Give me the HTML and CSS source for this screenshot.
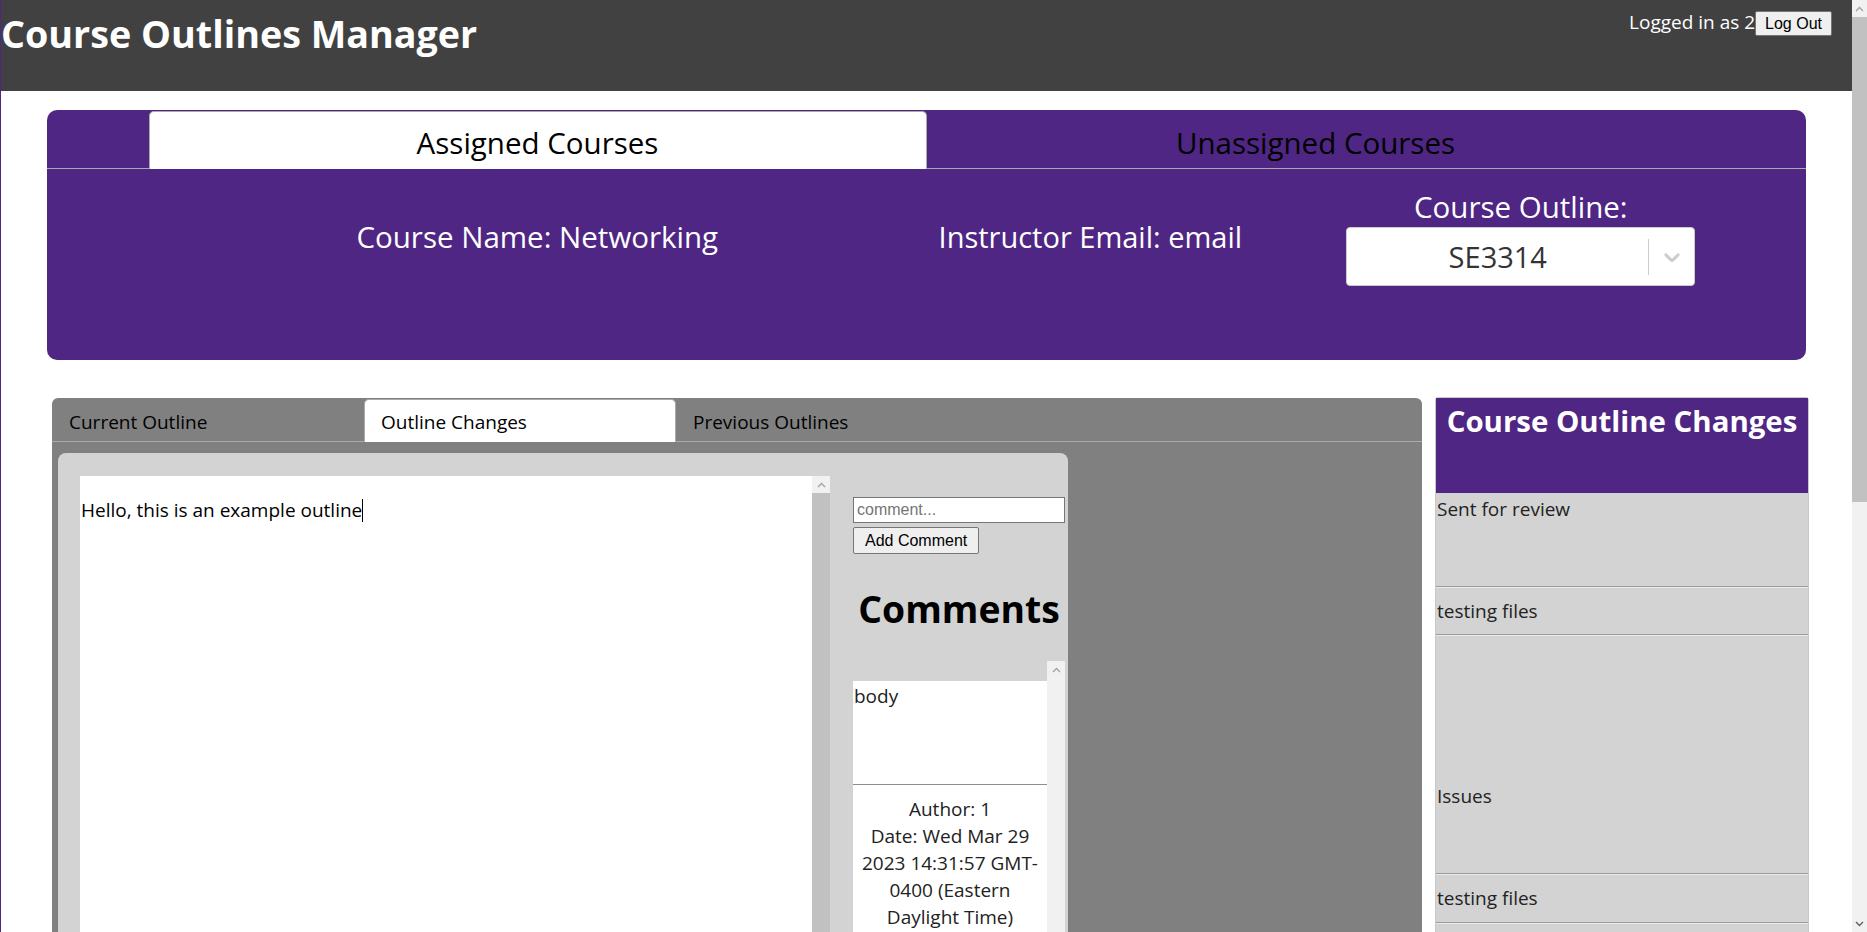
FILE: index.html
```html
<!DOCTYPE html>
<html lang="en">
<head>
<meta charset="utf-8">
<title>Course Outlines Manager</title>
<link rel="stylesheet" href="styles.css">
</head>
<body>
<div class="app">
  <div class="page">
    <header class="topbar">
      <h1 class="brand">Course Outlines Manager</h1>
      <div class="session"><span>Logged in as 2</span><button class="btn btn-logout" type="button">Log Out</button></div>
    </header>

    <section class="course-panel">
      <ul class="course-tabs">
        <li class="course-tab is-selected">Assigned Courses</li>
        <li class="course-tab">Unassigned Courses</li>
      </ul>
      <div class="course-info">
        <div class="info info-name">Course Name: Networking</div>
        <div class="info info-email">Instructor Email: email</div>
        <div class="info info-outline">
          <div class="outline-label">Course Outline:</div>
          <div class="select">
            <div class="select-value">SE3314</div>
            <span class="select-sep"></span>
            <span class="select-arrow"><svg viewBox="0 0 20 20" width="26" height="26" aria-hidden="true"><path fill="#cccccc" d="M4.516 7.548c0.436-0.446 1.043-0.481 1.576 0l3.908 3.747 3.908-3.747c0.533-0.481 1.141-0.446 1.574 0 0.436 0.445 0.408 1.197 0 1.615-0.406 0.418-4.695 4.502-4.695 4.502-0.217 0.223-0.502 0.335-0.787 0.335s-0.57-0.112-0.789-0.335c0 0-4.287-4.084-4.695-4.502s-0.436-1.17 0-1.615z"/></svg></span>
          </div>
        </div>
      </div>
    </section>

    <div class="workspace">
      <section class="outline-box">
        <ul class="outline-tabs">
          <li class="outline-tab">Current Outline</li>
          <li class="outline-tab is-selected">Outline Changes</li>
          <li class="outline-tab">Previous Outlines</li>
        </ul>
        <div class="outline-panel">
          <div class="editor">
            <div class="editor-text">Hello, this is an example outline<span class="caret"></span></div>
            <div class="vscroll">
              <span class="vscroll-btn"><svg width="9" height="6" viewBox="0 0 9 6" aria-hidden="true"><path d="M1 5 L4.5 1.5 L8 5" fill="none" stroke="#a3a3a3" stroke-width="1.4"/></svg></span>
              <span class="vscroll-thumb"></span>
            </div>
          </div>
          <div class="comments">
            <input class="comment-input" type="text" placeholder="comment...">
            <button class="btn btn-add" type="button">Add Comment</button>
            <h2 class="comments-title">Comments</h2>
            <div class="comment-list">
              <div class="comment-scroll">
                <div class="comment-card">
                  <div class="comment-body">body</div>
                  <div class="comment-meta">Author: 1<br>Date: Wed Mar 29 2023 14:31:57 GMT-0400 (Eastern Daylight Time)</div>
                </div>
              </div>
              <div class="vscroll">
                <span class="vscroll-btn"><svg width="9" height="6" viewBox="0 0 9 6" aria-hidden="true"><path d="M1 5 L4.5 1.5 L8 5" fill="none" stroke="#a3a3a3" stroke-width="1.4"/></svg></span>
                <span class="vscroll-track"></span>
              </div>
            </div>
          </div>
        </div>
      </section>

      <aside class="changes">
        <div class="changes-head"><h2 class="changes-title">Course Outline Changes</h2></div>
        <div class="change change--top">Sent for review</div>
        <hr class="change-sep">
        <div class="change">testing files</div>
        <hr class="change-sep">
        <div class="change change--issues">Issues</div>
        <hr class="change-sep">
        <div class="change change--last">testing files</div>
        <hr class="change-sep">
      </aside>
    </div>
  </div>

  <div class="page-scroll">
    <span class="ps-btn"><svg width="9" height="6" viewBox="0 0 9 6" aria-hidden="true"><path d="M1 5 L4.5 1.5 L8 5" fill="none" stroke="#a3a3a3" stroke-width="1.4"/></svg></span>
    <span class="ps-thumb"></span>
    <span class="ps-track"></span>
    <span class="ps-btn"><svg width="9" height="6" viewBox="0 0 9 6" aria-hidden="true"><path d="M1 1 L4.5 4.5 L8 1" fill="none" stroke="#606060" stroke-width="1.4"/></svg></span>
  </div>
</div>
</body>
</html>
```

FILE: styles.css
```css
* {
  box-sizing: border-box;
}

html,
body {
  margin: 0;
  height: 100%;
}

body {
  font-family: "Open Sans", "Noto Sans", sans-serif;
  color: #000;
  background: #fff;
  border-left: 1px solid #4f2683;
  overflow: hidden;
}

.app {
  display: flex;
  height: 932px;
}

.page {
  flex: 1;
  min-width: 0;
  overflow: hidden;
}

/* ---------- top bar ---------- */
.topbar {
  display: flex;
  justify-content: space-between;
  align-items: flex-start;
  background: #414141;
  color: #fff;
  padding: 8px 20px 31px 0;
}

.brand {
  margin: 0;
  font-size: 37.7px;
  line-height: 52px;
  font-weight: 700;
}

.session {
  display: flex;
  align-items: baseline;
  margin-top: 1px;
  font-size: 19px;
  line-height: 26px;
}

.btn {
  font-family: "Liberation Sans", Arial, sans-serif;
  font-size: 16px;
  line-height: 19px;
  color: #000;
  background: #efefef;
  border: 1px solid #767676;
  border-radius: 2px;
}

.btn-logout {
  padding: 2px 9px;
}

/* ---------- course panel ---------- */
.course-panel {
  width: 95%;
  margin: 19px auto 0;
  background: #4f2683;
  border-radius: 10px;
  padding-bottom: 74px;
}

.course-tabs {
  list-style: none;
  margin: 0;
  padding: 1px 0 0;
  display: flex;
  justify-content: center;
  border-bottom: 1px solid #aaa;
}

.course-tab {
  width: 778px;
  text-align: center;
  font-size: 29.5px;
  line-height: 40px;
  padding: 11px 12px 6px;
  border: 1px solid transparent;
  border-bottom: 0;
  margin-bottom: -1px;
  border-radius: 5px 5px 0 0;
}

.course-tab.is-selected {
  background: #fff;
  border-color: #aaa;
}

.course-info {
  display: flex;
  align-items: center;
  margin-top: 18px;
  padding-left: 290px;
  color: #fff;
  font-size: 29.5px;
  line-height: 40px;
}

.info {
  text-align: center;
}

.info-name {
  width: 400px;
}

.info-email {
  width: 400px;
  margin-left: 153px;
  font-size: 29px;
}

.info-outline {
  width: 349px;
  margin-left: 56px;
}

.select {
  display: flex;
  align-items: center;
  height: 59px;
  background: #fff;
  border: 1px solid #ccc;
  border-radius: 4px;
  color: #333;
}

.select-value {
  flex: 1;
  font-size: 29px;
  line-height: 40px;
  text-align: center;
}

.select-sep {
  width: 1px;
  height: 36px;
  background: #ccc;
}

.select-arrow {
  width: 45px;
  display: flex;
  justify-content: center;
  align-items: center;
}

/* ---------- workspace ---------- */
.workspace {
  display: flex;
  align-items: flex-start;
  margin: 37px 0 0 51px;
}

.outline-box {
  width: 1370px;
  min-height: 560px;
  margin-top: 1px;
  background: #808080;
  border-radius: 6px 6px 0 0;
}

.outline-tabs {
  list-style: none;
  margin: 0;
  padding: 1px 0 0;
  display: flex;
  border-bottom: 1px solid #aaa;
}

.outline-tab {
  width: 312px;
  padding: 9px 16px 7px;
  font-size: 19px;
  line-height: 26px;
  border: 1px solid transparent;
  border-bottom: 0;
  margin-bottom: -1px;
  border-radius: 5px 5px 0 0;
}

.outline-tab.is-selected {
  background: #fff;
  border-color: #aaa;
}

.outline-panel {
  display: flex;
  align-items: flex-start;
  width: 1010px;
  margin: 11px 0 0 6px;
  padding: 23px 3px 0 22px;
  background: #d3d3d3;
  border-radius: 8px 8px 0 0;
}

.editor {
  display: flex;
  width: 750px;
  height: 520px;
  background: #fff;
}

.editor-text {
  flex: 1;
  padding: 21px 0 0 1px;
  font-size: 19px;
  line-height: 26px;
}

.caret {
  display: inline-block;
  width: 1px;
  height: 23px;
  background: #000;
  vertical-align: -5px;
}

.vscroll {
  width: 18px;
  display: flex;
  flex-direction: column;
  background: #f1f1f1;
}

.vscroll-btn {
  height: 17px;
  display: flex;
  align-items: center;
  justify-content: center;
}

.vscroll-thumb {
  flex: 1;
  background: #c1c1c1;
}

.vscroll-track {
  flex: 1;
}

/* ---------- comments ---------- */
.comments {
  width: 212px;
  margin-left: 23px;
  padding-top: 21px;
  display: flex;
  flex-direction: column;
  align-items: flex-start;
}

.comment-input {
  width: 212px;
  height: 26px;
  margin: 0;
  padding: 1px 3px;
  border: 1px solid #767676;
  border-radius: 0;
  background: #fff;
  font-family: "Liberation Sans", Arial, sans-serif;
  font-size: 16px;
}

.comment-input::placeholder {
  color: #757575;
}

.btn-add {
  margin-top: 4px;
  padding: 3px 11px;
}

.comments-title {
  align-self: stretch;
  text-align: center;
  margin: 29px 0 0;
  font-size: 37.3px;
  line-height: 52px;
  font-weight: 700;
}

.comment-list {
  align-self: stretch;
  display: flex;
  height: 420px;
  margin-top: 26px;
}

.comment-scroll {
  flex: 1;
  padding-top: 20px;
}

.comment-card {
  background: #fff;
  min-height: 400px;
  font-size: 19px;
  color: #222;
}

.comment-body {
  min-height: 103px;
  padding: 2px 0 0 1px;
  line-height: 26px;
}

.comment-meta {
  border-top: 1px solid #8e8e8e;
  padding: 11px 3px 0;
  text-align: center;
  line-height: 27px;
}

/* ---------- changes list ---------- */
.changes {
  width: 374px;
  min-height: 560px;
  margin-left: 13px;
  border: 1px solid #c8c8c8;
  border-radius: 3px 3px 0 0;
  background: #d3d3d3;
}

.changes-head {
  background: #4f2683;
  color: #fff;
  padding: 3px 0 51px;
}

.changes-title {
  margin: 0;
  text-align: center;
  font-size: 29.4px;
  line-height: 41px;
  font-weight: 700;
}

.change {
  padding: 10px 0 10px 1px;
  font-size: 19px;
  line-height: 26px;
  color: #222;
}

.change--top {
  padding-top: 3px;
  padding-bottom: 64px;
}

.change--issues {
  padding-top: 147px;
  padding-bottom: 64px;
}

.change--last {
  padding-bottom: 11px;
}

.change-sep {
  margin: 0;
  border: 0;
  border-top: 1px solid #9a9a9a;
  border-bottom: 1px solid #ececec;
}

/* ---------- page scrollbar ---------- */
.page-scroll {
  width: 15px;
  display: flex;
  flex-direction: column;
  background: #f1f1f1;
}

.ps-btn {
  height: 17px;
  display: flex;
  align-items: center;
  justify-content: center;
}

.ps-thumb {
  height: 485px;
  background: #c1c1c1;
}

.ps-track {
  flex: 1;
}
```
